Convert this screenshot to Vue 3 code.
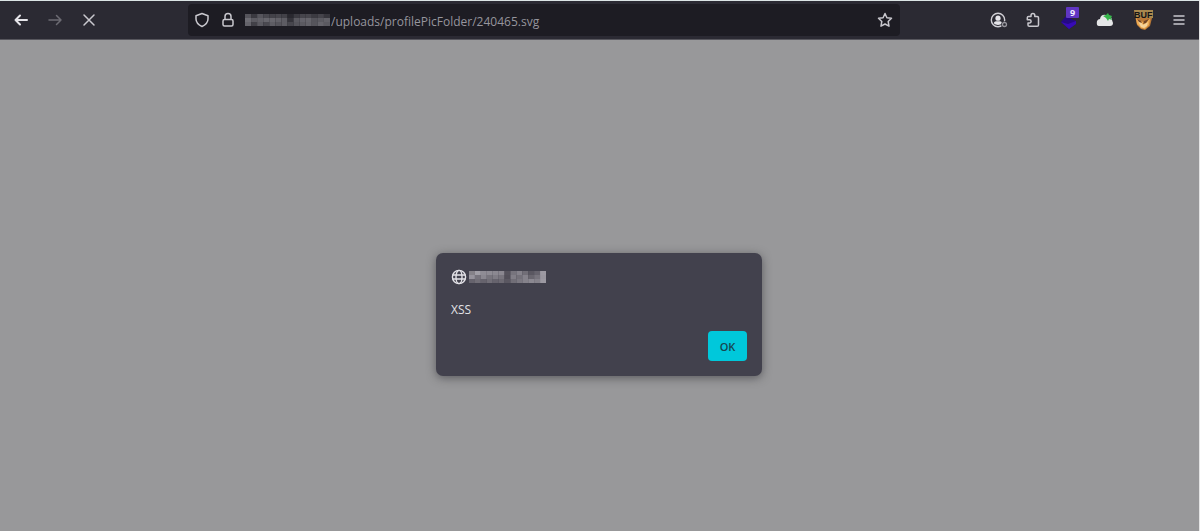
<script setup>
import { ref } from 'vue'

const path = ref('/uploads/profilePicFolder/240465.svg')
const open = ref(true)

// Shades of the pixelated host name, one row of blocks per line
const addressBlocks = [
  ['#55545b', '#3a3940', '#56555c', '#49484f', '#434249', '#47464d', '#424148', '#29282f', '#3b3a41', '#46454c', '#47464d', '#3b3a41', '#45444b', '#36353c'],
  ['#6d6c73', '#5c5b62', '#626168', '#66656c', '#67666d', '#626168', '#5d5c63', '#34333a', '#5a5960', '#63626a', '#65646b', '#55545b', '#5b5a61', '#626168'],
  ['#64636a', '#424148', '#5b5a61', '#4a4950', '#5e5d64', '#55545b', '#5d5c63', '#47464d', '#55545b', '#5b5a61', '#626168', '#56555c', '#65646b', '#5b5a61']
]
const dialogBlocks = [
  ['#858289', '#a09ea6', '#8f8c95', '#8e8b94', '#8b8891', '#8a8790', '#55525c', '#77747d', '#85828b', '#716e77', '#5a5761', '#66636d', '#9c99a2'],
  ['#96939c', '#77747d', '#8a8790', '#77747d', '#7f7c85', '#77747d', '#524f59', '#817e87', '#74717a', '#85828b', '#69666f', '#77747d', '#99969f'],
  ['#66636d', '#716e77', '#66636d', '#716e77', '#66636d', '#6c6972', '#5a5761', '#716e77', '#7b7881', '#85828b', '#8b8891', '#85828b', '#9c99a2']
]
</script>

<template>
  <div class="browser">
    <header class="toolbar">
      <nav class="nav" aria-label="Navigation">
        <button type="button" aria-label="Back">
          <svg width="16" height="16" viewBox="0 0 16 16" class="line strong"><path d="M14 8H2.500M7 3.500 2.500 8 7 12.500" /></svg>
        </button>
        <button type="button" aria-label="Forward" disabled>
          <svg width="16" height="16" viewBox="0 0 16 16" class="line"><path d="M2 8h12M9.500 3.500 14 8l-4.500 4.500" /></svg>
        </button>
        <button type="button" aria-label="Stop">
          <svg width="16" height="16" viewBox="0 0 16 16" class="line"><path d="m3 3 10 10m0-10L3 13" /></svg>
        </button>
      </nav>

      <div class="address">
        <button type="button" class="small" aria-label="Tracking protection">
          <svg width="16" height="16" viewBox="0 0 16 16" class="line"><path d="M8 1.500 14 3.700V7c0 3.300-2.200 5.700-6 7.500C4.200 12.700 2 10.300 2 7V3.700Z" /></svg>
        </button>
        <button type="button" class="small" aria-label="Connection secure">
          <svg width="16" height="16" viewBox="0 0 16 16" class="line"><rect x="3" y="7.500" width="10" height="6.500" rx="1.500" /><path d="M5 7V4.500a3 3 0 0 1 6 0V7" /></svg>
        </button>
        <svg class="host" width="85" height="14" viewBox="0 0 84 14" preserveAspectRatio="none" aria-hidden="true">
          <g v-for="(row, y) in addressBlocks" :key="y">
            <rect v-for="(shade, x) in row" :key="x" :x="x * 6" :y="y * 4 + 1" width="6" height="4" :fill="shade" />
          </g>
        </svg>
        <input v-model="path" class="path" type="text" aria-label="Address" spellcheck="false" />
        <button type="button" class="star" aria-label="Bookmark this page">
          <svg width="16" height="16" viewBox="0 0 16 16" class="line"><path d="m8 1.500 1.900 4.200 4.600.6-3.300 3.200.8 4.700L8 12l-4 2.200.8-4.700L1.500 6.300l4.600-.6Z" /></svg>
        </button>
      </div>

      <div class="tools">
        <button type="button" aria-label="Account">
          <svg width="18" height="16" viewBox="0 0 18 16">
            <circle cx="8" cy="8" r="6.700" fill="none" stroke="#d0cfd5" stroke-width="1.400" />
            <circle cx="8" cy="6.200" r="2.600" fill="#e5e4e9" />
            <path d="M3.800 11.300C4 9.500 5.500 9.300 8 9.300s4 .2 4.200 2C10.300 13.400 5.700 13.400 3.800 11.300Z" fill="#e5e4e9" />
            <circle cx="14.500" cy="12.500" r="3.300" fill="#2b2a33" />
            <circle cx="14.500" cy="12.500" r="2" fill="#2b2a33" stroke="#96959c" stroke-width="1.300" />
          </svg>
        </button>
        <button type="button" aria-label="Extensions">
          <svg width="16" height="16" viewBox="0 0 16 16" class="line"><path d="M6 4.500V3.400a1.900 1.900 0 0 1 3.800 0v1.100h2.400q1.300 0 1.300 1.300v7.100q0 1.300-1.300 1.300H4.300Q3 14.200 3 12.900v-2h1.500a1.600 1.600 0 0 0 0-3.200H2.300V5.800q0-1.300 1.300-1.300Z" /></svg>
        </button>
        <button type="button" class="wide" aria-label="Extension, 9 notifications">
          <svg width="18" height="20" viewBox="0 0 18 20">
            <path d="m1 12 5-6 10 5v3l-7 5Z" fill="#250a83" />
            <path d="m1 12 7 2 8-3v3l-7 5Z" fill="#370bb5" />
          </svg>
          <span class="badge">9</span>
        </button>
        <button type="button" aria-label="Cloud extension">
          <svg width="18" height="16" viewBox="0 0 18 16">
            <path d="M3 14Q0 14 1 9q1-2 3-2 1-5 6-4 5 0 6 5l1 3q0 3-3 3Z" fill="#e5e6e7" />
            <path d="m7 4 3-1 2-2 1 2 3 1-1 2 1 2-3-1-1 2-2-3Z" fill="#36b54b" />
          </svg>
        </button>
        <button type="button" class="mascot" aria-label="Bug bounty extension">
          <svg width="22" height="22" viewBox="0 0 22 22">
            <path d="m2 7 2 1 14 0 1 1-2 8-5 4-4-1-4-4Z" fill="#b97836" />
            <path d="m3 9 4 3 4 1 6-3-1 6-4 4-4-1-4-4Z" fill="#edaa52" />
            <path d="m5 12 3 1 2 3 5-3-1 4-3 2-3-1Z" fill="#f5d39b" />
            <path d="m4 10 4 2 1 2-3-1Zm12 0-3 4-3 1 1-3Z" fill="#714527" />
            <path d="M1 1h19v8H2Z" fill="#a8884e" />
            <text x="1" y="9">BUF</text>
          </svg>
        </button>
        <button type="button" class="menu" aria-label="Menu">
          <svg width="14" height="14" viewBox="0 0 14 14" class="line"><path d="M2 3h10M2 7h10M2 11h10" /></svg>
        </button>
      </div>
    </header>

    <main class="page">
      <section v-if="open" class="dialog" role="alertdialog" aria-modal="true" aria-label="Page message" aria-describedby="message">
        <div class="origin">
          <svg width="16" height="16" viewBox="0 0 16 16" class="globe"><circle cx="8" cy="8" r="6.600" /><ellipse cx="8" cy="8" rx="3" ry="6.600" /><path d="M1.500 6h13m-13 4h13" /></svg>
          <svg width="77" height="12" viewBox="0 0 78 12" preserveAspectRatio="none" aria-hidden="true">
            <g v-for="(row, y) in dialogBlocks" :key="y">
              <rect v-for="(shade, x) in row" :key="x" :x="x * 6" :y="y * 4" width="6" height="4" :fill="shade" />
            </g>
          </svg>
        </div>
        <p id="message" class="message">XSS</p>
        <div class="actions">
          <button type="button" class="ok" @click="open = false">OK</button>
        </div>
      </section>
    </main>
  </div>
</template>

<style>
body {
  margin: 0;
  background: #98989a;
}
</style>

<style scoped>
.browser {
  display: flex;
  flex-direction: column;
  box-sizing: border-box;
  min-height: 100vh;
  border-right: 1px solid #e4e4e5;
  background: #98989a;
  font-family: "Open Sans", "Noto Sans", sans-serif;
}

button {
  display: flex;
  align-items: center;
  justify-content: center;
  padding: 0;
  border: 0;
  background: none;
  color: #c9c8ce;
  font: inherit;
}

.line {
  fill: none;
  stroke: currentColor;
  stroke-width: 1.5;
  stroke-linecap: round;
  stroke-linejoin: round;
}

.strong {
  color: #e6e5ea;
  stroke-width: 2;
}

.toolbar {
  display: flex;
  align-items: center;
  box-sizing: border-box;
  height: 40px;
  border-top: 1px solid #dce5e5;
  border-bottom: 1px solid #57565d;
  background: #2b2a33;
}

.nav {
  display: flex;
  padding-left: 4px;
  margin-right: 82px;
}

.nav button,
.tools button {
  width: 34px;
  height: 34px;
}

.nav button:disabled {
  color: #6c6b73;
}

.address {
  display: flex;
  flex: 1;
  align-items: center;
  box-sizing: border-box;
  min-width: 0;
  height: 32px;
  padding-left: 1px;
  border-radius: 4px;
  background: #1d1c23;
}

.small {
  width: 26px;
  height: 28px;
}

.host {
  margin-left: 4px;
}

.path {
  flex: 1;
  min-width: 0;
  height: 28px;
  padding: 2px 0 0 1px;
  box-sizing: border-box;
  border: 0;
  outline: 0;
  background: none;
  color: #96959d;
  font: inherit;
  font-size: 12px;
}

.star {
  width: 30px;
  height: 28px;
}

.tools {
  display: flex;
  align-items: center;
  padding-left: 82px;
  padding-right: 7px;
}

.tools .wide {
  position: relative;
  width: 38px;
}

.badge {
  position: absolute;
  top: 4px;
  right: 9px;
  width: 13px;
  border-radius: 1px;
  background: #6036c3;
  color: #f4f0ff;
  font-size: 9px;
  font-weight: 700;
  line-height: 11px;
  text-align: center;
}

.tools .mascot {
  width: 44px;
}

.mascot text {
  fill: #171416;
  font: 700 9px "Liberation Sans", sans-serif;
}

.tools .menu {
  width: 26px;
}

.page {
  display: flex;
  flex: 1;
  align-items: flex-start;
  justify-content: center;
  padding: 213px 17px 32px 16px;
}

.dialog {
  box-sizing: border-box;
  width: 326px;
  padding: 15px;
  border-radius: 7px;
  background: #42414d;
  box-shadow: 0 2px 10px rgb(40 40 45 / 55%);
  color: #e2e1e6;
  font-size: 12px;
}

.origin {
  display: flex;
  align-items: center;
  gap: 2px;
  height: 17px;
}

.globe {
  fill: none;
  stroke: #e3e2e7;
  stroke-width: 1.4;
}

.message {
  margin: 16px 0 13px;
  line-height: 17px;
}

.actions {
  display: flex;
  justify-content: flex-end;
}

.ok {
  width: 39px;
  height: 30px;
  border-radius: 4px;
  background: #00c8db;
  color: #164650;
  font-size: 11px;
  font-weight: 600;
}
</style>
